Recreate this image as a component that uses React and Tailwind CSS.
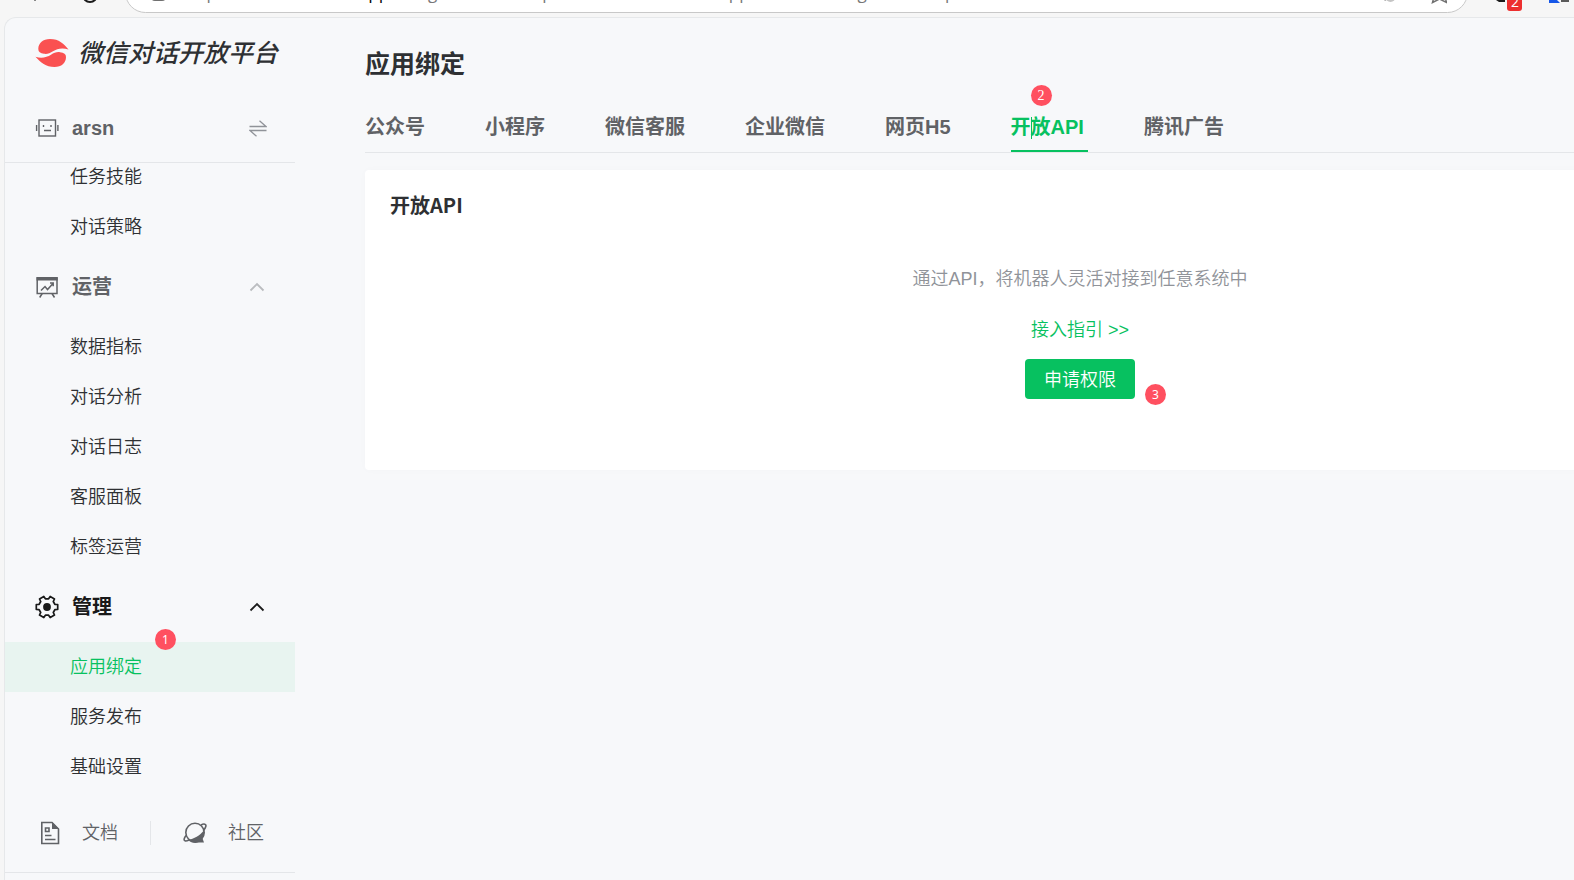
const NAV = [
  { items: ["任务技能", "对话策略"] },
  { title: "运营", icon: BoardIcon, items: ["数据指标", "对话分析", "对话日志", "客服面板", "标签运营"] },
  { title: "管理", icon: GearIcon, current: true, items: ["应用绑定", "服务发布", "基础设置"] },
]

const TABS = ["公众号", "小程序", "微信客服", "企业微信", "网页H5", "开放API", "腾讯广告"]

function LogoMark() {
  return (
    <svg width="34" height="30" viewBox="0 1 34 30" fill="#fa5151" aria-hidden="true">
      <path d="M3.300 11C3.300 5 8 1 15 1c9 0 14 5 18.500 10.500-6-2-11.500-1-15.500 1.800-3 2-6 3-9 2.500C5.300 15.200 3.300 14 3.300 11z" />
      <path d="M31 19c0 6-4.500 10-11.500 10C11 29 5.500 24.500.5 18.700c6 2 11.500.5 15.500-2 3-2 6-3 9-2.500 4 .5 6 1.800 6 4.800z" />
    </svg>
  )
}

function RobotIcon() {
  return (
    <svg width="24" height="20" viewBox="0 0 24 20" fill="none" stroke="#606266" strokeWidth="1.400" aria-hidden="true">
      <rect x="4" y="2" width="16.500" height="16" />
      <path d="M1.600 7v6M22.900 7v6M9 12.500h7" />
      <path d="M8.500 7v2M16 7v2" />
    </svg>
  )
}

function SwapIcon() {
  return (
    <svg width="18" height="17" viewBox="0 0 18 17" fill="none" stroke="#909399" strokeWidth="1.300" aria-hidden="true">
      <path d="M.5 6.500h16.500L10.500.8M17.500 10.500H1l6.500 5.700" />
    </svg>
  )
}

function ChevronIcon({ className }) {
  return (
    <svg width="16" height="10" viewBox="0 0 16 10" fill="none" stroke="currentColor" strokeWidth="1.800" className={className} aria-hidden="true">
      <path d="M1.500 8.500L8 2l6.500 6.500" />
    </svg>
  )
}

function BoardIcon() {
  return (
    <svg width="24" height="24" viewBox="0 0 24 24" fill="none" stroke="currentColor" strokeWidth="1.500" aria-hidden="true">
      <path d="M2.200 3h19.800v15.500H2.200z" />
      <path d="M1.500 2h21.200v3.500H1.500z" fill="currentColor" stroke="none" />
      <path d="M6 15.500l4-4 2.500 3L18 8.500M15 8h3.200v3.200M7.200 18.500l-2.500 4M17 18.500l2.500 4" />
    </svg>
  )
}

function GearIcon() {
  return (
    <svg width="24" height="24" viewBox="0 0 24 24" fill="none" stroke="currentColor" strokeWidth="1.700" strokeLinejoin="round" aria-hidden="true">
      <path d="M19.850 9.300L22.700 9.500V14.500L19.850 14.700 18.260 17.450 19.500 20 15.200 22.500 13.600 20.150H10.400L8.800 22.500 4.500 20 5.740 17.450 4.150 14.700 1.300 14.500V9.500L4.150 9.300 5.740 6.550 4.500 4 8.800 1.500 10.400 3.850H13.600L15.200 1.500 19.500 4 18.260 6.550z" />
      <circle cx="12" cy="12" r="3.900" fill="currentColor" stroke="none" />
    </svg>
  )
}

function DocIcon() {
  return (
    <svg width="20" height="24" viewBox="0 0 20 24" fill="none" stroke="#606266" strokeWidth="1.600" aria-hidden="true">
      <path d="M1.800 1.500H12l6.500 6.500v14.500H1.800z" />
      <path d="M12 1v7h7z" fill="#606266" stroke="none" />
      <path d="M5.500 7h3.500v3.500H5.500zM5 14.500h6.500M5 18.500h10.500" />
    </svg>
  )
}

function PlanetIcon() {
  return (
    <svg width="24" height="22" viewBox="0 0 24 22" fill="none" stroke="#606266" strokeWidth="1.600" aria-hidden="true">
      <circle cx="12" cy="10.500" r="9.200" />
      <path d="M18 3c3-1.700 5.500-1 4.800 1.500-.3 1.200-1.200 2.700-2.500 4.200M3 13.500c-2 2.500-2.500 4.800-1 5.300 1 .4 2.300 0 4-.8" />
      <path d="M5 18c6-1 12-4.500 15.800-9.500.8 3 .2 6-1.300 8l1.500 4h-5C12 21.500 8 21 5 18z" fill="#606266" stroke="none" />
    </svg>
  )
}

function StepBadge({ children, className }) {
  return (
    <span className={`absolute flex size-[21px] items-center justify-center rounded-full bg-[#ff5060] font-normal leading-none text-white ${className}`}>
      {children}
    </span>
  )
}

/** Lower edge of the browser toolbar above the page. */
function BrowserBar() {
  return (
    <div className="flex h-[17px] shrink-0 items-start overflow-hidden">
      <svg width="121" height="4" viewBox="0 0 121 4" fill="none" stroke="#1b1b1b" strokeWidth="2" className="shrink-0" aria-hidden="true">
        <path d="M29.500-1l2 2" strokeWidth="1" />
        <circle cx="86" cy="-5" r="7" />
      </svg>
      <div className="-mt-7 flex h-[41px] min-w-0 flex-1 items-center overflow-hidden rounded-full border border-[#c8c8c8] bg-white pl-[25px] pr-5">
        <span className="h-4 w-[15px] shrink-0 rounded-sm border-2 border-[#707070] bg-[#bbbbbb]" />
        <span className="ml-[18px] min-w-0 flex-1 overflow-hidden whitespace-nowrap font-['Open_Sans',sans-serif] text-[17px] leading-5 text-[#777777]">
          https://chatbot.weixin.<span className="text-black">qq.com</span>
          /gUxvEoTrObE/profile/Zx13WmdleRk/applicationBinding?menuId=p
        </span>
        <svg width="66" height="22" viewBox="0 0 66 22" fill="none" strokeWidth="1.500" className="shrink-0" aria-hidden="true">
          <path d="M1 17c3-1 2 2 4 1" stroke="#b8b8b8" />
          <circle cx="9.500" cy="15" r="5" fill="#c4c4c4" />
          <path d="M53 15l-1.500 5.500 7-3.500 7 3.500L64 15" stroke="#707070" />
        </svg>
      </div>
      <svg width="106" height="13" viewBox="0 0 106 13" className="shrink-0" aria-hidden="true">
        <path d="M28 0h9v2h-6z" fill="#1b1b1b" />
        <rect x="39" y="-6" width="15" height="17" rx="3" fill="#ed2f2f" />
        <text x="43" y="7" fill="#fff" fontSize="14" fontFamily="Open Sans">2</text>
        <path d="M81 0h8l3 3H81z" fill="#1657e8" />
        <path d="M93 0h8v2h-8z" fill="#5a5a5a" />
      </svg>
    </div>
  )
}

function NavGroup({ group }) {
  const Icon = group.icon
  return (
    <section>
      {group.title && (
        <button
          type="button"
          className={`flex h-[70px] w-full items-center pl-[30px] pr-[30px] text-[20px] font-bold ${group.current ? "text-[#191919]" : "text-[#606266]"}`}
        >
          <Icon />
          <span className="ml-[13px]">{group.title}</span>
          <ChevronIcon className={`ml-auto ${group.current ? "" : "text-[#bbbdc0]"}`} />
        </button>
      )}
      <ul>
        {group.items.map((item) => (
          <li key={item} className="relative">
            <a
              href="#"
              className={`flex h-[50px] items-center pl-[65px] text-[18px] font-[350] ${item === "应用绑定" ? "bg-[#e8f4f0] text-[#07c160]" : "text-[#2e3033]"}`}
            >
              {item}
            </a>
            {item === "应用绑定" && <StepBadge className="-top-[13px] left-[150px] font-['Noto_Sans',sans-serif] text-[12px]">1</StepBadge>}
          </li>
        ))}
      </ul>
    </section>
  )
}

function Sidebar() {
  return (
    <aside className="flex w-[290px] shrink-0 flex-col">
      <div className="flex h-[72px] items-center pl-[30px]">
        <LogoMark />
        <span className="ml-[9px] whitespace-nowrap text-[25px] font-medium italic text-[#2e3033]">微信对话开放平台</span>
      </div>
      <div className="flex h-[73px] items-center border-b border-[#e4e6e9] pl-[30px] pr-7 pt-1 text-[20px] font-bold text-[#606266]">
        <RobotIcon />
        <span className="ml-[13px]">arsn</span>
        <button type="button" aria-label="切换机器人" className="ml-auto">
          <SwapIcon />
        </button>
      </div>
      <nav className="overflow-hidden">
        <div className="-mt-[11px]">
          {NAV.map((group, i) => (
            <NavGroup key={i} group={group} />
          ))}
        </div>
      </nav>
      <div className="flex h-[81px] shrink-0 items-center border-b border-[#e4e6e9] pl-[35px] pt-0.5 text-[18px] font-[350] text-[#606266]">
        <a href="#" className="flex items-center gap-[22px]">
          <DocIcon />
          文档
        </a>
        <span className="ml-8 h-6 w-px bg-[#e4e6e9]" />
        <a href="#" className="ml-8 flex items-center gap-[21px]">
          <PlanetIcon />
          社区
        </a>
      </div>
    </aside>
  )
}

function Tabs() {
  return (
    <div role="tablist" className="mt-[19px] flex h-[52px] gap-[60px] border-b border-[#e4e6e9] text-[20px] font-bold text-[#606266]">
      {TABS.map((tab) => {
        const active = tab === "开放API"
        return (
          <button key={tab} type="button" role="tab" aria-selected={active} className={`relative whitespace-nowrap ${active ? "text-[#07c160]" : ""}`}>
            {tab}
            {active && (
              <>
                <span className="absolute -right-1 bottom-0 left-0 h-0.5 bg-[#07c160]" />
                <span className="absolute left-5 top-4 h-[22px] w-px bg-[#07c160]" />
                <StepBadge className="-top-4 left-5 font-['Liberation_Serif',serif] text-[14px]">2</StepBadge>
              </>
            )}
          </button>
        )
      })}
    </div>
  )
}

export default function App() {
  return (
    <div className="flex min-h-screen flex-col overflow-hidden bg-[#f6f6f6] pl-1 font-['Liberation_Sans','Noto_Sans_CJK_SC',sans-serif]">
      <BrowserBar />
      <div className="flex min-w-0 flex-1 overflow-hidden rounded-tl-xl border-l border-t border-[#e6e8ea] bg-[#f7f8fa]">
        <Sidebar />
        <main className="min-w-0 flex-1 overflow-hidden pl-[70px] pt-7">
          <div className="min-w-[1430px]">
            <h1 className="text-[25px] font-bold leading-9 text-[#2e3033]">应用绑定</h1>
            <Tabs />
            <section className="mt-[17px] h-[300px] rounded bg-white px-[25px] pt-5 shadow-[0_0_8px_rgba(0,0,0,0.02)]">
              <h2 className="font-['Noto_Sans_CJK_SC',sans-serif] text-[20px] font-bold leading-[30px] text-[#2e3033]">开放API</h2>
              <div className="mt-[45px] flex flex-col items-center text-[18px] font-[350] leading-7">
                <p className="text-[#909399]">通过API，将机器人灵活对接到任意系统中</p>
                <a href="#" className="mt-[23px] text-[#07c160]">接入指引 &gt;&gt;</a>
                <div className="relative mt-[15px]">
                  <button type="button" className="h-10 w-[110px] rounded bg-[#07c160] pt-0.5 text-white">申请权限</button>
                  <StepBadge className="-right-[31px] top-[25px] font-['Noto_Sans',sans-serif] text-[12px]">3</StepBadge>
                </div>
              </div>
            </section>
          </div>
        </main>
      </div>
    </div>
  )
}
